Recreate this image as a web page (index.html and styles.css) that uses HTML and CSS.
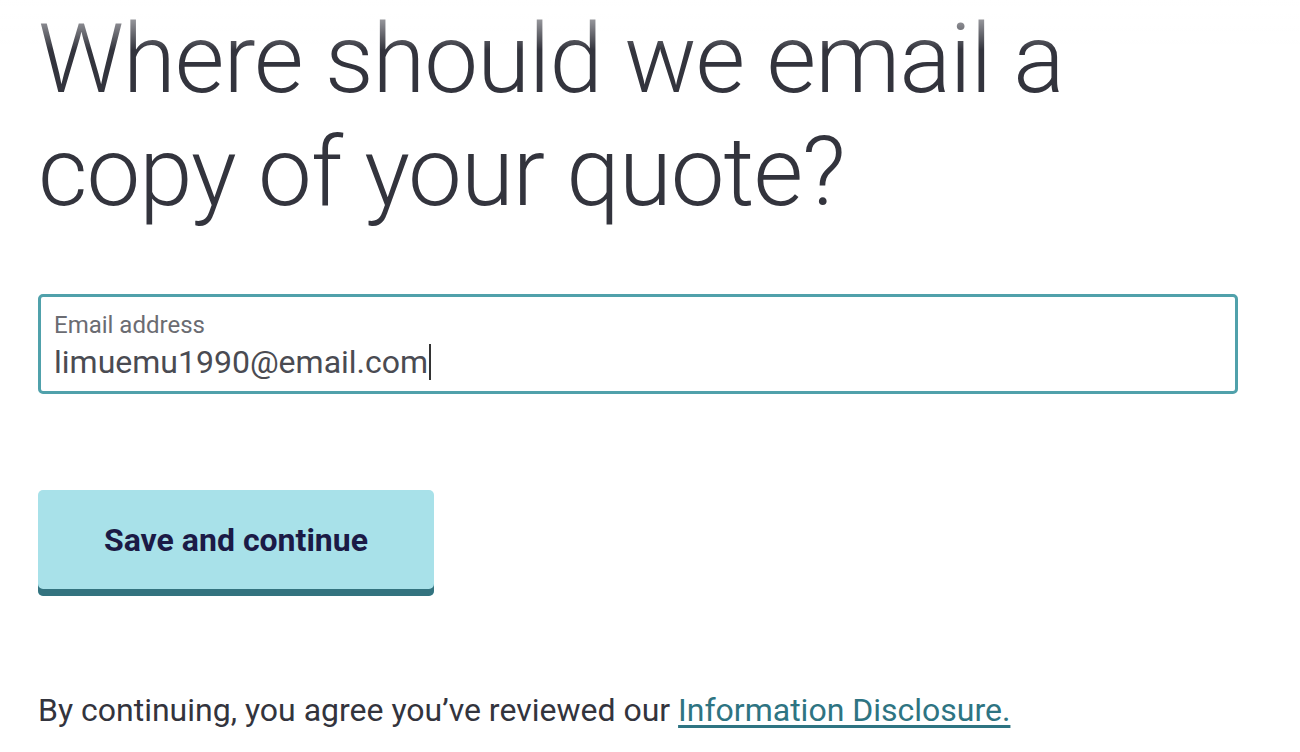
FILE: index.html
```html
<!DOCTYPE html>
<html lang="en">
<head>
  <meta charset="UTF-8">
  <meta name="viewport" content="width=device-width, initial-scale=1.0">
  <title>Email your quote</title>
  <link rel="stylesheet" href="styles.css">
</head>
<body>

  <div class="fade"></div>

  <main class="page">
    <h1 class="title">Where should we email a copy of your quote?</h1>

    <form class="quote-form">
      <label class="field">
        <span class="field-label">Email address</span>
        <span class="field-value">limuemu1990@email.com<span class="caret"></span></span>
      </label>

      <button type="submit" class="btn-primary">Save and continue</button>
    </form>

    <p class="disclaimer">By continuing, you agree you’ve reviewed our <a href="#">Information Disclosure.</a></p>
  </main>

</body>
</html>
```

FILE: styles.css
```css
* {
  box-sizing: border-box;
}

body {
  margin: 0;
  padding: 0;
  font-family: Roboto, "Noto Sans", sans-serif;
  background: #fff;
  color: #33343d;
}

/* content scrolls under the top edge */
.fade {
  position: fixed;
  top: 0;
  left: 0;
  right: 0;
  height: 50px;
  background: linear-gradient(to bottom, rgba(255,255,255,0.8), rgba(255,255,255,0));
  pointer-events: none;
}

.page {
  width: 1200px;
  margin-left: 38px;
}

.title {
  margin: 0;
  padding-top: 3px;
  width: 1100px;
  font-size: 96px;
  font-weight: 300;
  line-height: 113px;
  letter-spacing: -1px;
  color: #33343d;
}

.quote-form {
  margin-top: 65px;
}

.field {
  display: flex;
  flex-direction: column;
  height: 100px;
  border: 3px solid #50a1ab;
  border-radius: 5px;
  padding: 14px 13px 0;
}

.field-label {
  font-size: 24px;
  line-height: 28px;
  color: #6b6c72;
}

.field-value {
  display: flex;
  align-items: center;
  margin-top: 4px;
  font-size: 32px;
  line-height: 38px;
  color: #4a4b52;
}

.caret {
  display: inline-block;
  width: 1.5px;
  height: 36px;
  margin-left: 1px;
  background: #333;
}

.btn-primary {
  display: block;
  margin-top: 96px;
  width: 396px;
  height: 106px;
  padding-bottom: 7px;
  border: none;
  border-radius: 5px;
  background: #a8e1e9;
  box-shadow: inset 0 -7px 0 #33737f;
  font-family: inherit;
  font-size: 32px;
  font-weight: 700;
  color: #1b1a46;
  cursor: pointer;
}

.disclaimer {
  margin: 95px 0 0;
  font-size: 32px;
  line-height: 38px;
  color: #33343d;
}

.disclaimer a {
  color: #2e7482;
  text-decoration: underline;
  text-underline-offset: 4px;
}
```
